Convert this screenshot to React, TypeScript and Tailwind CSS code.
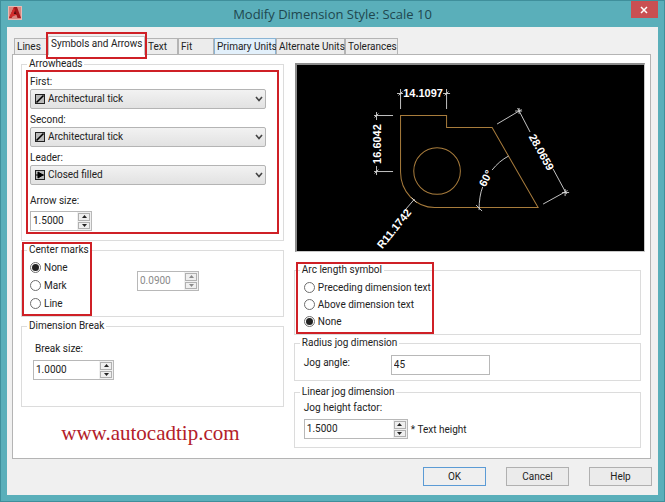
import { useState, type ReactNode } from "react"

const TABS = [
  { name: "Lines", width: "w-[34px]" },
  { name: "Symbols and Arrows", width: "w-[97px]" },
  { name: "Text", width: "w-[33px]" },
  { name: "Fit", width: "w-[36px]" },
  { name: "Primary Units", width: "w-[62px]" },
  { name: "Alternate Units", width: "w-[69px]" },
  { name: "Tolerances", width: "w-[53px]" },
]

const ARROW_TYPES = ["Architectural tick", "Closed filled"]

// Red highlight drawn over a part of the dialog
function Highlight({ className }: { className: string }) {
  return <div className={`pointer-events-none absolute z-10 border-2 border-[#cf2026] ${className}`} />
}

function Group({
  title,
  className = "",
  bodyClass = "",
  children,
}: {
  title: string
  className?: string
  bodyClass?: string
  children: ReactNode
}) {
  return (
    <fieldset className={`min-w-0 border border-[#dcdcdc] ${className}`}>
      <legend className="ml-[5px] px-0.5 leading-3">{title}</legend>
      <div className={`relative ${bodyClass}`}>{children}</div>
    </fieldset>
  )
}

function ArrowIcon({ type }: { type: string }) {
  return (
    <svg viewBox="0 0 10 10" className="pointer-events-none absolute left-[5px] top-[5px] h-[10px] w-[10px]">
      <rect x="0.5" y="0.5" width="9" height="9" fill="#b9b9b9" stroke="#222" />
      {type === "Closed filled" ? (
        <path d="M1 5H9M3 2L8 5L3 8Z" fill="#000" stroke="#000" />
      ) : (
        <path d="M1.5 8.5L8.5 1.5" stroke="#000" strokeWidth="1.6" />
      )}
    </svg>
  )
}

function ArrowSelect({ id, label, initial }: { id: string; label: string; initial: string }) {
  const [value, setValue] = useState(initial)

  return (
    <div>
      <label htmlFor={id} className="mb-px block leading-3">
        {label}
      </label>
      <div className="relative">
        <ArrowIcon type={value} />
        <select
          id={id}
          value={value}
          onChange={(e) => setValue(e.target.value)}
          className="block h-5 w-full appearance-none rounded-xs border border-[#b4b4b4] bg-linear-to-b from-[#f2f2f2] to-[#e2e2e2] pl-[17px] leading-4"
        >
          {ARROW_TYPES.map((t) => (
            <option key={t}>{t}</option>
          ))}
        </select>
        <svg viewBox="0 0 8 6" className="pointer-events-none absolute right-[3px] top-[7px] h-[6px] w-[8px]">
          <path d="M1 1L4 4.5L7 1" fill="none" stroke="#444" strokeWidth="1.6" />
        </svg>
      </div>
    </div>
  )
}

function Spinner({
  id,
  initial,
  step,
  label,
  disabled,
  className,
}: {
  id: string
  initial: number
  step: number
  label?: string
  disabled?: boolean
  className: string
}) {
  const [value, setValue] = useState(initial.toFixed(4))

  const change = (delta: number) => {
    setValue(Math.max(0, (parseFloat(value) || 0) + delta).toFixed(4))
  }

  return (
    <div className={`flex h-5 border border-[#b8b8b8] bg-white ${disabled ? "text-[#8a8a8a]" : ""} ${className}`}>
      <input
        id={id}
        aria-label={label}
        value={value}
        disabled={disabled}
        onChange={(e) => setValue(e.target.value)}
        className="min-w-0 flex-1 pb-0.5 pl-0.5 outline-none"
      />
      <div className="flex w-[14px] flex-col gap-px bg-[#f0f0f0] p-px">
        <button
          type="button"
          aria-label="Increase"
          disabled={disabled}
          onClick={() => change(step)}
          className="flex flex-1 items-center justify-center border border-[#b0b0b0] bg-[#efefef]"
        >
          <svg viewBox="0 0 5 3" className="h-[3px] w-[5px]">
            <path d="M0 3L2.5 0L5 3Z" fill="currentColor" />
          </svg>
        </button>
        <button
          type="button"
          aria-label="Decrease"
          disabled={disabled}
          onClick={() => change(-step)}
          className="flex flex-1 items-center justify-center border border-[#b0b0b0] bg-[#efefef]"
        >
          <svg viewBox="0 0 5 3" className="h-[3px] w-[5px]">
            <path d="M0 0L2.5 3L5 0Z" fill="currentColor" />
          </svg>
        </button>
      </div>
    </div>
  )
}

function RadioList({ name, options, initial, row }: { name: string; options: string[]; initial: string; row: string }) {
  const [value, setValue] = useState(initial)

  return (
    <div>
      {options.map((option) => (
        <label key={option} className={`flex items-center gap-[3px] ${row}`}>
          <input
            type="radio"
            name={name}
            checked={value === option}
            onChange={() => setValue(option)}
            className="grid size-[11px] appearance-none place-items-center rounded-full border border-[#6e6e6e] bg-white checked:before:size-[7px] checked:before:rounded-full checked:before:bg-[#222] checked:before:content-['']"
          />
          {option}
        </label>
      ))}
    </div>
  )
}

function Preview() {
  return (
    <div className="ml-px border-2 border-b border-r border-[#8c8c8c] border-b-[#c8c8c8] border-r-[#c8c8c8] bg-black">
      <svg
        viewBox="1 0 347 186"
        className="block w-full font-['Liberation_Sans',Arial,sans-serif] text-[11px] font-bold"
        fill="none"
      >
        <g stroke="#a87c3c">
          <path d="M104.5 50.5H150.5V62.5H196L242 142.5H138.5A34 35.5 0 0 1 104.5 107Z" />
          <circle cx="141" cy="106" r="23.3" />
        </g>

        <g stroke="#d8d8d8" strokeWidth="0.9">
          {/* horizontal */}
          <path d="M104.5 24V44M150.5 24V44M101 28.5H107M147 28.5H154M102.5 30.5L106.5 26.5M148.5 30.5L152.5 26.5" />
          {/* vertical */}
          <path d="M78 50.5H97M78 106.5H97M80.5 47V55M80.5 101V110M78.5 52.5L82.5 48.5M78.5 108.5L82.5 104.5" />
          {/* aligned */}
          <path d="M201 59L225.5 44.5M247 139L271.5 125.5M221.5 43L234 67M257 104L270.5 129M219 46H226M266 127.5H273M223 43V49M269 124V131" />
          {/* radius */}
          <path d="M109 145L118.5 134M115.5 132.5L120.5 137.5" />
          {/* angle */}
          <path d="M212.5 91Q203 96 196 105M186.6 121.8Q183 131 183 145M180 140L186 146" />
        </g>

        <g fill="#fff" textAnchor="middle">
          <text x="127" y="32">14.1097</text>
          <text transform="translate(85 79) rotate(-90)">16.6042</text>
          <text transform="translate(242 89) rotate(61)">28.0659</text>
          <text transform="translate(101 166) rotate(-51)">R11.1742</text>
          <text transform="translate(193 115) rotate(-62)">60°</text>
        </g>
      </svg>
    </div>
  )
}

export default function App() {
  const [tab, setTab] = useState("Symbols and Arrows")

  return (
    <div className="flex min-h-screen flex-col border border-[#3f8f9b] bg-[#5aafba] px-1.5 pb-1.5 font-['Roboto','Liberation_Sans',sans-serif] text-[10px] text-[#222]">
      {/* Title bar */}
      <header className="flex h-[26px] items-start justify-between">
        <svg viewBox="0 0 14 14" className="ml-px mt-[5px] h-[14px] w-[26px]" preserveAspectRatio="xMinYMin">
          <rect width="14" height="14" fill="#e9b9b4" />
          <rect x="1" y="1" width="12" height="12" fill="#d9847e" />
          <path d="M1 12L6 1H9L13 12H9.5L8.5 9H5L3.5 12Z" fill="#a3161a" />
          <path d="M6 1L8 9L1 12Z" fill="#d22b2b" />
          <path d="M7 4.5L8.2 8H5.8Z" fill="#4d0b0d" />
        </svg>
        <h1 className="font-['Open_Sans','Noto_Sans',sans-serif] text-[13px] leading-[26px] text-[#20474f]">
          Modify Dimension Style: Scale 10
        </h1>
        <button
          type="button"
          aria-label="Close"
          className="flex h-[17px] w-[27px] items-center justify-center bg-[#c94f52]"
        >
          <svg viewBox="0 0 8 8" className="size-2">
            <path d="M1 1L7 7M7 1L1 7" stroke="#fff" strokeWidth="1.5" />
          </svg>
        </button>
      </header>

      <main className="flex flex-1 flex-col bg-[#f0f0f0] pl-[5px] pr-[7px] pt-[9px]">
        <div role="tablist" className="flex h-[18px] items-end pl-0.5">
          {TABS.map(({ name, width }) => {
            const active = tab === name
            return (
              <button
                key={name}
                type="button"
                role="tab"
                aria-selected={active}
                onClick={() => setTab(name)}
                className={`relative whitespace-nowrap border border-b-0 pl-0.5 text-left leading-3 ${width} ${
                  active
                    ? "z-10 -mb-px h-[19px] border-[#c4c4c4] bg-white pb-1"
                    : name === "Primary Units"
                      ? "h-4 border-[#8ab4d4] bg-[#e2f0fb]"
                      : "h-4 border-[#b4b4b4] bg-[#ececec]"
                }`}
              >
                {name}
                {active && <Highlight className="-bottom-1 -left-[3px] -right-[3px] -top-[5px]" />}
              </button>
            )
          })}
        </div>

        <div
          role="tabpanel"
          className="grid flex-1 grid-cols-[262fr_350fr] gap-x-[10px] border border-[#b4b4b4] bg-white pb-2 pl-2 pr-[5px]"
        >
          <div className="flex flex-col pt-[3px]">
            <Group title="Arrowheads" bodyClass="pb-[9px] pl-2 pr-[17px] pt-1.5">
              <Highlight className="bottom-[6px] left-1 right-1 top-0" />
              <div className="flex flex-col gap-[5px]">
                <ArrowSelect id="first" label="First:" initial="Architectural tick" />
                <ArrowSelect id="second" label="Second:" initial="Architectural tick" />
                <ArrowSelect id="leader" label="Leader:" initial="Closed filled" />
              </div>
              <label htmlFor="arrow-size" className="mb-1 mt-[10px] block leading-3">
                Arrow size:
              </label>
              <Spinner id="arrow-size" initial={1.5} step={0.5} className="w-[62px]" />
            </Group>

            <Group title="Center marks" className="mt-[3px]" bodyClass="pb-1 pl-2 pt-0.5">
              <Highlight className="bottom-0 left-0 -top-[14px] w-[70px]" />
              <div className="flex items-start">
                <div className="w-[107px]">
                  <RadioList name="center-marks" options={["None", "Mark", "Line"]} initial="None" row="h-[18px]" />
                </div>
                <Spinner
                  id="mark-size"
                  label="Center mark size"
                  initial={0.09}
                  step={0.01}
                  disabled
                  className="mt-[13px] w-[62px]"
                />
              </div>
            </Group>

            <Group title="Dimension Break" className="mt-[3px]" bodyClass="pb-[26px] pl-[11px] pt-[11px]">
              <label htmlFor="break-size" className="mb-[5px] block pl-0.5 leading-3">
                Break size:
              </label>
              <Spinner id="break-size" initial={1} step={0.5} className="w-[81px]" />
            </Group>

            <a
              href="http://www.autocadtip.com"
              className="mr-1 mt-3 self-center font-['Liberation_Serif','Times_New_Roman',serif] text-[21px] leading-7 text-[#b3202a]"
            >
              www.autocadtip.com
            </a>
          </div>

          <div className="flex flex-col pt-2">
            <Preview />

            <div className="flex flex-col pr-1">
              <Group title="Arc length symbol" className="mt-3" bodyClass="pb-1 pl-[9px] pt-[3px]">
                <Highlight className="-top-[14px] bottom-0 left-px w-[138px]" />
                <RadioList
                  name="arc-length"
                  options={["Preceding dimension text", "Above dimension text", "None"]}
                  initial="None"
                  row="h-[17px]"
                />
              </Group>

              <Group title="Radius jog dimension" className="mt-[2px]" bodyClass="flex items-start pb-[5px] pl-[9px] pt-[6px]">
                <label htmlFor="jog-angle" className="w-[87px] pt-0.5 leading-3">
                  Jog angle:
                </label>
                <input id="jog-angle" defaultValue="45" className="h-5 w-[99px] border border-[#b8b8b8] pb-0.5 pl-0.5" />
              </Group>

              <Group title="Linear jog dimension" className="mt-[5px]" bodyClass="pb-2 pl-[9px] pt-1">
                <label htmlFor="jog-height" className="mb-[5px] block leading-3">
                  Jog height factor:
                </label>
                <div className="flex items-center gap-[3px]">
                  <Spinner id="jog-height" initial={1.5} step={0.5} className="w-[104px]" />
                  <span>* Text height</span>
                </div>
              </Group>
            </div>
          </div>
        </div>

        <footer className="-mr-px flex justify-end gap-5 pb-[9px] pt-2">
          <button type="button" className="h-[19px] w-[63px] border border-[#5b9bd5] bg-[#efefef] leading-3">
            OK
          </button>
          <button type="button" className="h-[19px] w-[63px] border border-[#b0b0b0] bg-[#ebebeb] leading-3">
            Cancel
          </button>
          <button type="button" className="h-[19px] w-[63px] border border-[#b0b0b0] bg-[#ebebeb] leading-3">
            Help
          </button>
        </footer>
      </main>
    </div>
  )
}
